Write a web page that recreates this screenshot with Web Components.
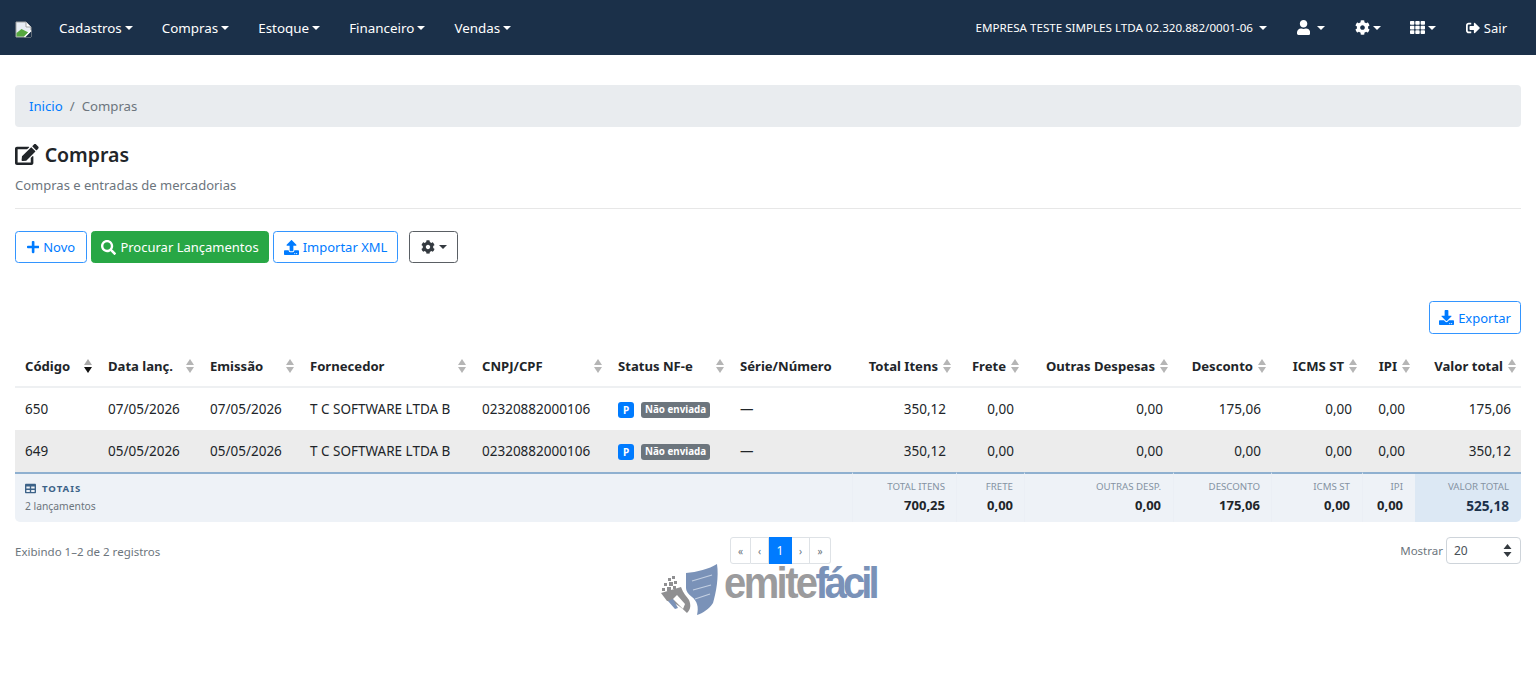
<!DOCTYPE html>
<html lang="pt-BR">
<head>
<meta charset="utf-8">
<title>Compras</title>
<style>
  html, body { margin: 0; background: #fff; }
  body { font-family: "Noto Sans", "Open Sans", sans-serif; font-size: 14px; color: #212529; }
</style>
</head>
<body>
<app-navbar></app-navbar>
<main-page></main-page>

<script>
const ICONS = {
  plus: [448, 'M416 208H272V64c0-17.67-14.33-32-32-32h-32c-17.67 0-32 14.33-32 32v144H32c-17.67 0-32 14.33-32 32v32c0 17.67 14.33 32 32 32h144v144c0 17.67 14.33 32 32 32h32c17.67 0 32-14.33 32-32V304h144c17.67 0 32-14.33 32-32v-32c0-17.67-14.33-32-32-32z'],
  search: [512, 'M505 442.7L405.3 343c-4.5-4.5-10.6-7-17-7H372c27.6-35.3 44-79.7 44-128C416 93.1 322.9 0 208 0S0 93.1 0 208s93.1 208 208 208c48.3 0 92.7-16.4 128-44v16.3c0 6.4 2.5 12.5 7 17l99.7 99.7c9.4 9.4 24.6 9.4 33.9 0l28.3-28.3c9.4-9.4 9.4-24.6.1-34zM208 336c-70.7 0-128-57.2-128-128 0-70.7 57.2-128 128-128 70.7 0 128 57.2 128 128 0 70.7-57.2 128-128 128z'],
  user: [448, 'M224 256c70.7 0 128-57.3 128-128S294.7 0 224 0 96 57.3 96 128s57.3 128 128 128zm89.6 32h-16.7c-22.2 10.2-46.9 16-72.9 16s-50.6-5.8-72.9-16h-16.7C60.2 288 0 348.2 0 422.4V464c0 26.5 21.5 48 48 48h352c26.5 0 48-21.5 48-48v-41.6c0-74.2-60.2-134.4-134.4-134.4z'],
  cog: [512, 'M487.4 315.7l-42.6-24.6c4.3-23.2 4.3-47 0-70.2l42.6-24.6c4.9-2.8 7.1-8.6 5.5-14-11.1-35.6-30-67.8-54.7-94.6-3.8-4.1-10-5.1-14.8-2.3L380.8 110c-17.9-15.4-38.5-27.3-60.8-35.1V25.8c0-5.6-3.9-10.5-9.4-11.7-36.7-8.2-74.3-7.8-109.2 0-5.5 1.2-9.4 6.1-9.4 11.7V75c-22.2 7.9-42.8 19.8-60.8 35.1L88.7 85.5c-4.9-2.8-11-1.9-14.8 2.3-24.7 26.7-43.6 58.9-54.7 94.6-1.7 5.4.6 11.2 5.5 14L67.3 221c-4.3 23.2-4.3 47 0 70.2l-42.6 24.6c-4.9 2.8-7.1 8.6-5.5 14 11.1 35.6 30 67.8 54.7 94.6 3.8 4.1 10 5.1 14.8 2.3l42.6-24.6c17.9 15.4 38.5 27.3 60.8 35.1v49.2c0 5.6 3.9 10.5 9.4 11.7 36.7 8.2 74.3 7.8 109.2 0 5.5-1.2 9.4-6.1 9.4-11.7v-49.2c22.2-7.9 42.8-19.8 60.8-35.1l42.6 24.6c4.9 2.8 11 1.9 14.8-2.3 24.7-26.7 43.6-58.9 54.7-94.6 1.5-5.5-.7-11.3-5.6-14.1zM256 336c-44.1 0-80-35.9-80-80s35.9-80 80-80 80 35.9 80 80-35.9 80-80 80z'],
  th: [512, 'M149.333 56v80c0 13.255-10.745 24-24 24H24c-13.255 0-24-10.745-24-24V56c0-13.255 10.745-24 24-24h101.333c13.255 0 24 10.745 24 24zm181.334 240v-80c0-13.255-10.745-24-24-24H205.333c-13.255 0-24 10.745-24 24v80c0 13.255 10.745 24 24 24h101.333c13.256 0 24.001-10.745 24.001-24zm32-240v80c0 13.255 10.745 24 24 24H488c13.255 0 24-10.745 24-24V56c0-13.255-10.745-24-24-24H386.667c-13.255 0-24 10.745-24 24zm-32 80V56c0-13.255-10.745-24-24-24H205.333c-13.255 0-24 10.745-24 24v80c0 13.255 10.745 24 24 24h101.333c13.256 0 24.001-10.745 24.001-24zm-205.334 56H24c-13.255 0-24 10.745-24 24v80c0 13.255 10.745 24 24 24h101.333c13.255 0 24-10.745 24-24v-80c0-13.255-10.745-24-24-24zM0 376v80c0 13.255 10.745 24 24 24h101.333c13.255 0 24-10.745 24-24v-80c0-13.255-10.745-24-24-24H24c-13.255 0-24 10.745-24 24zm386.667-56H488c13.255 0 24-10.745 24-24v-80c0-13.255-10.745-24-24-24H386.667c-13.255 0-24 10.745-24 24v80c0 13.255 10.745 24 24 24zm0 160H488c13.255 0 24-10.745 24-24v-80c0-13.255-10.745-24-24-24H386.667c-13.255 0-24 10.745-24 24v80c0 13.255 10.745 24 24 24zM181.333 376v80c0 13.255 10.745 24 24 24h101.333c13.255 0 24-10.745 24-24v-80c0-13.255-10.745-24-24-24H205.333c-13.255 0-24 10.745-24 24z'],
  signout: [512, 'M497 273L329 441c-15 15-41 4.5-41-17v-96H152c-13.3 0-24-10.7-24-24v-96c0-13.3 10.7-24 24-24h136V88c0-21.4 25.9-32 41-17l168 168c9.3 9.4 9.3 24.6 0 34zM192 436v-40c0-6.6-5.4-12-12-12H96c-17.7 0-32-14.3-32-32V160c0-17.7 14.3-32 32-32h84c6.6 0 12-5.4 12-12V76c0-6.6-5.4-12-12-12H96c-53 0-96 43-96 96v192c0 53 43 96 96 96h84c6.6 0 12-5.4 12-12z'],
  upload: [512, 'M296 384h-80c-13.3 0-24-10.7-24-24V192h-87.7c-17.8 0-26.7-21.5-14.1-34.1L242.3 5.7c7.5-7.5 19.8-7.5 27.3 0l152.2 152.2c12.6 12.6 3.7 34.1-14.1 34.1H320v168c0 13.3-10.7 24-24 24zm216-8v112c0 13.3-10.7 24-24 24H24c-13.3 0-24-10.7-24-24V376c0-13.3 10.7-24 24-24h136v8c0 30.9 25.1 56 56 56h80c30.9 0 56-25.1 56-56v-8h136c13.3 0 24 10.7 24 24zm-124 88c0-11-9-20-20-20s-20 9-20 20 9 20 20 20 20-9 20-20zm64 0c0-11-9-20-20-20s-20 9-20 20 9 20 20 20 20-9 20-20z'],
  download: [512, 'M216 0h80c13.3 0 24 10.7 24 24v168h87.7c17.8 0 26.7 21.5 14.1 34.1L269.7 378.3c-7.5 7.5-19.8 7.5-27.3 0L90.1 226.1c-12.6-12.6-3.7-34.1 14.1-34.1H192V24c0-13.3 10.7-24 24-24zm296 376v112c0 13.3-10.7 24-24 24H24c-13.3 0-24-10.7-24-24V376c0-13.3 10.7-24 24-24h146.7l49 49c20.1 20.1 52.5 20.1 72.6 0l49-49H488c13.3 0 24 10.7 24 24zm-124 88c0-11-9-20-20-20s-20 9-20 20 9 20 20 20 20-9 20-20zm64 0c0-11-9-20-20-20s-20 9-20 20 9 20 20 20 20-9 20-20z'],
  edit: [576, 'M402.6 83.2l90.2 90.2c3.8 3.8 3.8 10 0 13.8L274.4 405.6l-92.8 10.3c-12.4 1.4-22.9-9.1-21.5-21.5l10.3-92.8L388.8 83.2c3.8-3.8 10-3.8 13.8 0zm162-22.9l-48.8-48.8c-15.2-15.2-39.9-15.2-55.2 0l-35.4 35.4c-3.8 3.8-3.8 10 0 13.8l90.2 90.2c3.8 3.8 10 3.8 13.8 0l35.4-35.4c15.2-15.3 15.2-40 0-55.2zM384 346.2V448H64V128h229.8c3.2 0 6.2-1.3 8.5-3.5l40-40c7.6-7.6 2.2-20.5-8.5-20.5H48C21.5 64 0 85.5 0 112v352c0 26.5 21.5 48 48 48h352c26.5 0 48-21.5 48-48V306.2c0-10.7-12.9-16-20.5-8.5l-40 40c-2.2 2.3-3.5 5.3-3.5 8.5z'],
  table: [512, 'M464 32H48C21.49 32 0 53.49 0 80v352c0 26.51 21.49 48 48 48h416c26.51 0 48-21.49 48-48V80c0-26.51-21.49-48-48-48zM224 416H64v-96h160v96zm0-160H64v-96h160v96zm224 160H288v-96h160v96zm0-160H288v-96h160v96z']
};

class AppIcon extends HTMLElement {
  connectedCallback() {
    const [w, d] = ICONS[this.getAttribute('name')];
    const size = this.getAttribute('size') || 14;
    this.attachShadow({ mode: 'open' }).innerHTML = `
      <style>
        :host { display: inline-flex; flex: none; }
        svg { display: block; fill: currentColor; }
      </style>
      <svg width="${size * w / 512}" height="${size}" viewBox="0 0 ${w} 512"><path d="${d}"/></svg>`;
  }
}
customElements.define('app-icon', AppIcon);

class NavItem extends HTMLElement {
  constructor() {
    super();
    this.attachShadow({ mode: 'open' }).innerHTML = `
      <style>
        :host { display: inline-flex; align-items: center; color: #fff; white-space: nowrap; }
        :host([caret])::after {
          content: ""; margin-left: var(--caret-gap, 3px);
          border-top: 4.2px solid currentColor; border-left: 4.2px solid transparent; border-right: 4.2px solid transparent;
        }
      </style>
      <slot></slot>`;
  }
}
customElements.define('nav-item', NavItem);

class AppNavbar extends HTMLElement {
  constructor() {
    super();
    this.attachShadow({ mode: 'open' }).innerHTML = `
      <style>
        :host { display: flex; align-items: center; height: 55px; background: #1b3049; padding: 0 29px 0 15px; font-size: 13.4px; color: #fff; box-sizing: border-box; }
        svg.broken { display: block; margin: 3px 27px 0 0; }
        .menu, .right { display: flex; align-items: center; }
        .menu { gap: 29px; }
        .right { margin-left: auto; }
        .empresa { font-size: 11.6px; margin-right: 30px; --caret-gap: 6px; }
        .ico { margin-right: 29.6px; --caret-gap: 3px; }
        .sair { font-size: 13px; }
        .sair span { margin-left: 4px; }
      </style>
      <svg class="broken" width="17" height="17" viewBox="0 0 17 17">
        <path d="M1 1h10l5 5v10H1z" fill="#e9eef5" stroke="#a3a3a3"/>
        <path d="M11 1v5h5" fill="#fff" stroke="#a3a3a3"/>
        <path d="M1.5 15.5V12l5-4 4 2 3 1.5-3 4z" fill="#55a73f"/>
        <path d="M10 16l6-6v6z" fill="#1b3049"/>
        <path d="M9.5 16L16 9.5" stroke="#fff" fill="none" stroke-width="1.5"/>
      </svg>
      <div class="menu">
        <nav-item caret>Cadastros</nav-item>
        <nav-item caret>Compras</nav-item>
        <nav-item caret>Estoque</nav-item>
        <nav-item caret>Financeiro</nav-item>
        <nav-item caret>Vendas</nav-item>
      </div>
      <div class="right">
        <nav-item caret class="empresa">EMPRESA TESTE SIMPLES LTDA 02.320.882/0001-06</nav-item>
        <nav-item caret class="ico" style="--caret-gap:7px"><app-icon name="user" size="15"></app-icon></nav-item>
        <nav-item caret class="ico"><app-icon name="cog" size="15"></app-icon></nav-item>
        <nav-item caret class="ico"><app-icon name="th" size="15"></app-icon></nav-item>
        <nav-item class="sair"><app-icon name="signout" size="14"></app-icon><span>Sair</span></nav-item>
      </div>`;
  }
}
customElements.define('app-navbar', AppNavbar);

class AppButton extends HTMLElement {
  constructor() {
    super();
    this.attachShadow({ mode: 'open' }).innerHTML = `
      <style>
        :host { display: inline-flex; align-items: center; justify-content: center; gap: 4px; box-sizing: border-box; height: 32px; border: 1px solid #3395ff; border-radius: 3.5px; color: #007bff; font-size: 13px; white-space: nowrap; background: #fff; }
        :host([kind="success"]) { background: #28a745; border-color: #28a745; color: #fff; }
        :host([kind="dark"]) { border-color: #5a5f64; color: #343a40; }
      </style>
      <slot></slot>`;
  }
}
customElements.define('app-button', AppButton);

class SortArrows extends HTMLElement {
  constructor() {
    super();
    this.attachShadow({ mode: 'open' }).innerHTML = `
      <style>
        :host { display: inline-flex; flex-direction: column; gap: 2px; flex: none; margin-left: 5px; }
        i { display: block; border-left: 4.5px solid transparent; border-right: 4.5px solid transparent; }
        .up { border-bottom: 6px solid #b5b5b5; }
        .down { border-top: 6px solid #b5b5b5; }
        :host([active]) .up { border-bottom-color: #a9a9a9; }
        :host([active]) .down { border-top-color: #111; }
      </style>
      <i class="up"></i><i class="down"></i>`;
  }
}
customElements.define('sort-arrows', SortArrows);

const COLS = [
  ['Código', 83, 'l', 'active'], ['Data lanç.', 102, 'l'], ['Emissão', 100, 'l'], ['Fornecedor', 172, 'l'],
  ['CNPJ/CPF', 136, 'l'], ['Status NF-e', 122, 'l'], ['Série/Número', 122, 'n'], ['Total Itens', 104, 'r'],
  ['Frete', 68, 'r'], ['Outras Despesas', 149, 'r'], ['Desconto', 98, 'r'], ['ICMS ST', 91, 'r'], ['IPI', 53, 'r'], ['Valor total', 106, 'r']
];
const ROWS = [
  ['650', '07/05/2026', '07/05/2026', 'T C SOFTWARE LTDA B', '02320882000106', '350,12', '0,00', '0,00', '175,06', '0,00', '0,00', '175,06'],
  ['649', '05/05/2026', '05/05/2026', 'T C SOFTWARE LTDA B', '02320882000106', '350,12', '0,00', '0,00', '0,00', '0,00', '0,00', '350,12']
];
const TOTALS = [['TOTAL ITENS', '700,25'], ['FRETE', '0,00'], ['OUTRAS DESP.', '0,00'], ['DESCONTO', '175,06'], ['ICMS ST', '0,00'], ['IPI', '0,00'], ['VALOR TOTAL', '525,18']];

class ComprasTable extends HTMLElement {
  constructor() {
    super();
    const head = COLS.map(([t, , a, act]) => {
      const cls = a === 'r' ? 'end' : a === 'n' ? '' : 'between';
      return `<th><div class="h ${cls}"><span>${t}</span>${a === 'n' ? '' : `<sort-arrows ${act || ''}></sort-arrows>`}</div></th>`;
    }).join('');
    const body = ROWS.map(r => `<tr>
      ${r.slice(0, 5).map(v => `<td>${v}</td>`).join('')}
      <td><span class="p">P</span><span class="st">Não enviada</span></td>
      <td>—</td>
      ${r.slice(5).map(v => `<td class="n">${v}</td>`).join('')}
    </tr>`).join('');
    const foot = TOTALS.map(([l, v], i) => `<td class="t ${i === 6 ? 'final' : ''}"><small>${l}</small><b>${v}</b></td>`).join('');
    this.attachShadow({ mode: 'open' }).innerHTML = `
      <style>
        :host { display: block; font-size: 13.5px; }
        table { width: 100%; table-layout: fixed; border-collapse: separate; border-spacing: 0; }
        th { height: 41px; padding: 0 5px 0 10px; box-sizing: content-box; border-bottom: 2px solid #eef0f2; font-weight: 700; text-align: left; font-size: 13.1px; color: #212529; white-space: nowrap; }
        .h { display: flex; align-items: center; }
        .between { justify-content: space-between; margin-right: 1px; }
        .end { justify-content: flex-end; }
        td { height: 42px; padding: 0 10px; box-sizing: border-box; white-space: nowrap; color: #212529; }
        tbody tr:nth-child(2) td { background: #ececec; }
        td.n { text-align: right; }
        .p { display: inline-block; width: 16px; height: 16px; line-height: 16px; margin-right: 7px; text-align: center; border-radius: 3px; background: #007bff; color: #fff; font-size: 10px; font-weight: 700; vertical-align: middle; }
        .st { display: inline-block; height: 16px; line-height: 16px; padding: 0 4px; border-radius: 3px; background: #6c757d; color: #fff; font-size: 9.8px; font-weight: 700; vertical-align: middle; }
        tfoot td { height: 50px; background: #eef2f7; border-top: 2px solid #8fb0d0; padding: 0 10px 2px; }
        tfoot tr td:first-child { border-radius: 0 0 0 5px; }
        tfoot tr td:last-child { border-radius: 0 0 5px 0; }
        .label { display: flex; align-items: center; gap: 6px; font-size: 9.6px; font-weight: 700; letter-spacing: 1px; color: #3c6288; }
        .count { display: block; margin-top: 4px; font-size: 10.3px; color: #6c757d; }
        td.t { text-align: right; padding: 0 12px 2px 0; border-left: 1px solid #ebeff5; }
        td.t:nth-of-type(2), td.t:nth-of-type(3), td.t:nth-of-type(5) { padding-right: 11px; }
        td.t small { display: block; font-size: 9.7px; line-height: 14px; color: #8593a3; }
        td.t b { display: block; margin-top: 2px; font-size: 13px; line-height: 18px; color: #212529; }
        td.final { background: #dce8f4; border-left: 0; }
        td.final b { margin-top: 3px; font-size: 13.6px; color: #1b3049; }
      </style>
      <table>
        <colgroup>${COLS.map(c => `<col style="width:${c[1]}px">`).join('')}</colgroup>
        <thead><tr>${head}</tr></thead>
        <tbody>${body}</tbody>
        <tfoot><tr>
          <td colspan="7">
            <div class="label"><app-icon name="table" size="11"></app-icon><span>TOTAIS</span></div>
            <span class="count">2 lançamentos</span>
          </td>
          ${foot}
        </tr></tfoot>
      </table>`;
  }
}
customElements.define('compras-table', ComprasTable);

class AppPager extends HTMLElement {
  constructor() {
    super();
    this.attachShadow({ mode: 'open' }).innerHTML = `
      <style>
        :host { display: inline-flex; height: 27px; font-size: 10px; color: #6c757d; }
        a { display: flex; flex: none; align-items: center; justify-content: center; box-sizing: border-box; width: 18px; border: 1px solid #dee2e6; border-left-width: 0; background: #fff; }
        a:first-of-type { border-left-width: 1px; border-radius: 3px 0 0 3px; width: 21px; }
        a:last-of-type { border-radius: 0 3px 3px 0; width: 21px; }
        a.on { background: #007bff; border-color: #007bff; color: #fff; width: 23px; font-size: 12px; }
      </style>
      <a>«</a><a>‹</a><a class="on">1</a><a>›</a><a>»</a>`;
  }
}
customElements.define('app-pager', AppPager);

class EmiteLogo extends HTMLElement {
  constructor() {
    super();
    this.attachShadow({ mode: 'open' }).innerHTML = `
      <style>
        :host { display: flex; align-items: flex-start; width: 218px; height: 52px; }
        svg { display: block; flex: none; }
        .word { margin: -3px 0 0 -1px; font: 700 40px/1 "Liberation Sans", sans-serif; letter-spacing: -2.6px; color: #9b9b9d; white-space: nowrap; transform: scaleY(1.12); transform-origin: left top; }
        .word span { letter-spacing: -4px; color: #7a92b8; }
      </style>
      <svg width="66" height="52" viewBox="0 0 66 52">
        <g fill="#8f8f91">
          <rect x="9" y="15" width="3" height="3"/><rect x="13" y="13" width="3" height="3"/><rect x="5" y="20" width="3" height="3"/>
          <rect x="10" y="19" width="4" height="4"/><rect x="15" y="18" width="3" height="3"/><rect x="3" y="25" width="3" height="3"/>
          <rect x="8" y="24" width="4" height="4"/><rect x="14" y="23" width="3" height="3"/>
          <path d="M2 30l20-6c2 6 6 10 8 13 2 5 2 9-2 13-6-6-14-12-20-12z"/>
        </g>
        <path d="M9 38l5-2 5 9-3 1z" fill="#7a92b8"/>
        <path d="M14 36l4-4 8 9-2 5z" fill="#fff"/>
        <path d="M27 10C38 9 50 6 58 1c2 13-1 29-4 39-4 6-10 10-16 12 2-8 0-14-5-18-4-3-6-6-6-9z" fill="#7a92b8"/>
        <g stroke="#c4d0e2" stroke-width="1.2" fill="none">
          <path d="M33 18l20-6"/><path d="M34 27l18-5"/><path d="M36 36l15-5"/>
        </g>
      </svg>
      <div class="word">emite<span>fácil</span></div>`;
  }
}
customElements.define('emite-logo', EmiteLogo);

class MainPage extends HTMLElement {
  constructor() {
    super();
    this.attachShadow({ mode: 'open' }).innerHTML = `
      <style>
        :host { display: block; padding: 30px 15px 0; }
        .crumb { display: flex; align-items: center; height: 42px; padding: 0 14px; background: #e9ecef; border-radius: 4px; box-sizing: border-box; font-size: 13.2px; color: #6c757d; }
        .crumb a { color: #007bff; }
        .crumb i { font-style: normal; margin: 0 7px; }
        h1 { display: flex; align-items: center; gap: 6px; margin: 14px 0 0; height: 26px; font-size: 19.5px; font-weight: 600; color: #212529; }
        p { margin: 9px 0 0; height: 18px; line-height: 18px; font-size: 13px; color: #6c757d; }
        hr { margin: 14px 0 0; height: 1px; border: 0; background: #e7e7e7; }
        .tools { display: flex; margin-top: 22px; }
        .tools app-button { margin-right: 4px; }
        .tools app-button:last-child { margin: 0 0 0 7px; }
        .export { display: flex; justify-content: flex-end; margin: 38px 0 11px; }
        .bottom { display: grid; grid-template-columns: 715px 101px 1fr; align-items: center; margin-top: 15px; }
        .info { padding-top: 2px; font-size: 11.5px; color: #6c757d; }
        .show { display: flex; align-items: center; justify-content: flex-end; gap: 3px; font-size: 11.5px; color: #6c757d; }
        .select { display: flex; align-items: center; justify-content: space-between; box-sizing: border-box; width: 75px; height: 27px; padding: 0 8px 0 7px; border: 1px solid #ced4da; border-radius: 4px; font-size: 12px; color: #495057; }
        .select svg { display: block; }
        .logo-row { display: flex; justify-content: center; margin-top: -1px; }
      </style>
      <nav class="crumb"><a>Inicio</a><i>/</i><span>Compras</span></nav>
      <h1><app-icon name="edit" size="21"></app-icon><span>Compras</span></h1>
      <p>Compras e entradas de mercadorias</p>
      <hr>
      <div class="tools">
        <app-button style="width:72px"><app-icon name="plus" size="14"></app-icon>Novo</app-button>
        <app-button kind="success" style="width:178px"><app-icon name="search" size="15"></app-icon>Procurar Lançamentos</app-button>
        <app-button style="width:125px"><app-icon name="upload" size="15"></app-icon>Importar XML</app-button>
        <app-button kind="dark" style="width:49px"><app-icon name="cog" size="14"></app-icon><nav-item caret style="color:#343a40;--caret-gap:0"></nav-item></app-button>
      </div>
      <div class="export"><app-button style="width:92px;height:33px"><app-icon name="download" size="15"></app-icon>Exportar</app-button></div>
      <compras-table></compras-table>
      <div class="bottom">
        <div class="info">Exibindo 1–2 de 2 registros</div>
        <app-pager></app-pager>
        <div class="show">Mostrar
          <div class="select"><span>20</span><svg width="9" height="13" viewBox="0 0 9 13"><path d="M4.5 0l4 5H.5zM4.5 13l-4-5h8z" fill="#343a40"/></svg></div>
        </div>
      </div>
      <div class="logo-row"><emite-logo></emite-logo></div>`;
  }
}
customElements.define('main-page', MainPage);
</script>
</body>
</html>
